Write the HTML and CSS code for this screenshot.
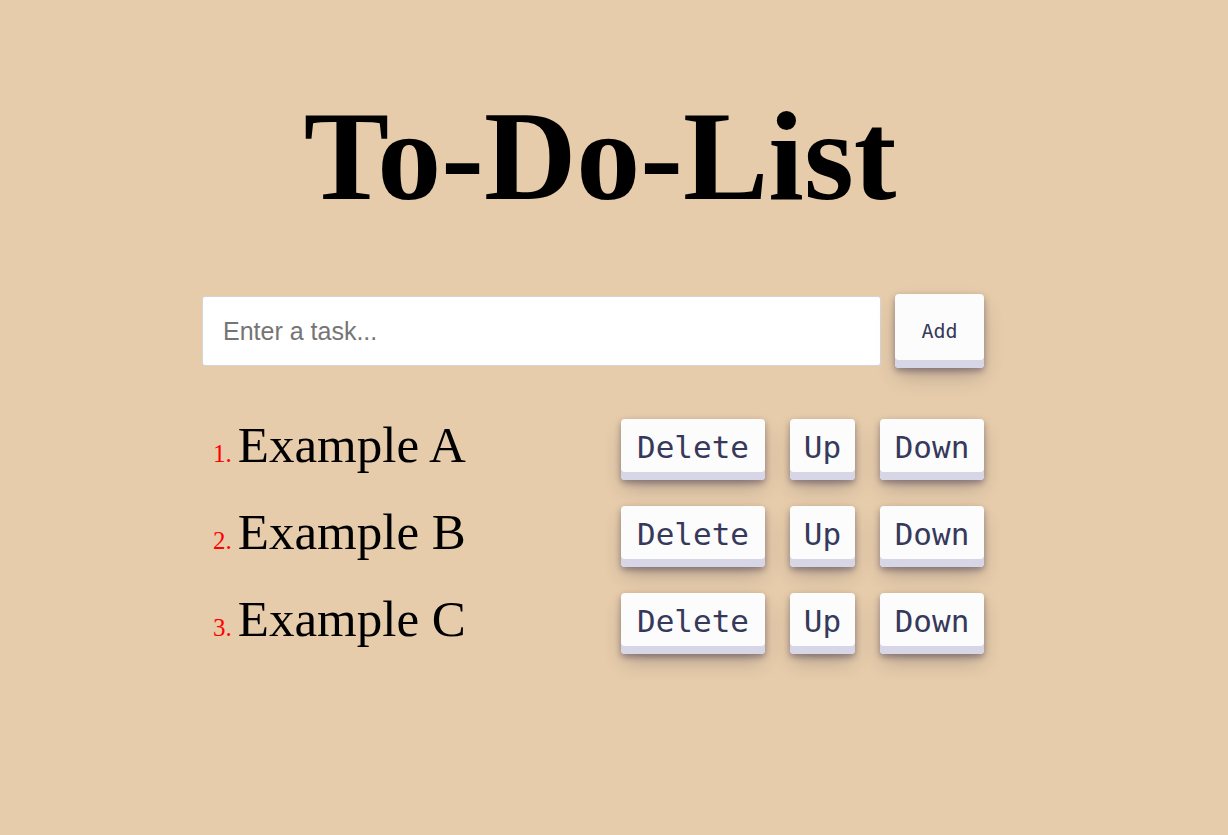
FILE: index.html
```html
<!DOCTYPE html>
<html lang="en">
<head>
<meta charset="utf-8">
<title>To-Do-List</title>
<link rel="stylesheet" href="styles.css">
</head>
<body>
  <h1 class="title">To-Do-List</h1>
  <main class="app">
    <form class="task-form">
      <input class="task-input" type="text" placeholder="Enter a task...">
      <button class="btn btn-add" type="button">Add</button>
    </form>
    <ol class="task-list">
      <li class="task">
        <span class="task-label">Example A</span>
        <div class="task-actions">
          <button class="btn btn-delete" type="button">Delete</button>
          <button class="btn btn-up" type="button">Up</button>
          <button class="btn btn-down" type="button">Down</button>
        </div>
      </li>
      <li class="task">
        <span class="task-label">Example B</span>
        <div class="task-actions">
          <button class="btn btn-delete" type="button">Delete</button>
          <button class="btn btn-up" type="button">Up</button>
          <button class="btn btn-down" type="button">Down</button>
        </div>
      </li>
      <li class="task">
        <span class="task-label">Example C</span>
        <div class="task-actions">
          <button class="btn btn-delete" type="button">Delete</button>
          <button class="btn btn-up" type="button">Up</button>
          <button class="btn btn-down" type="button">Down</button>
        </div>
      </li>
    </ol>
  </main>
</body>
</html>
```
FILE: styles.css
```css
html, body {
  margin: 0;
  background: #e6ccaa;
}
body {
  padding: 0 28px 0 0;
  min-height: 835px;
  box-sizing: border-box;
  font-family: "Liberation Serif", "Times New Roman", serif;
  color: #000;
}
.title {
  margin: 85px 0 0;
  text-align: center;
  font-size: 128px;
  font-weight: bold;
  line-height: 142px;
}
.app {
  width: 796px;
  margin: 67px auto 0;
  padding-right: 14px;
  box-sizing: border-box;
}
.task-form {
  display: flex;
  align-items: center;
  gap: 14px;
  margin: 0;
}
.task-input {
  flex: 1;
  height: 70px;
  box-sizing: border-box;
  border: 1px solid #d4d4d4;
  border-radius: 3px;
  background: #fff;
  padding: 0 20px;
  font-family: "Liberation Sans", Arial, sans-serif;
  font-size: 25px;
  color: #222;
  outline: none;
}
.task-input::placeholder {
  color: #757575;
}
.btn {
  display: inline-flex;
  align-items: center;
  justify-content: center;
  box-sizing: border-box;
  border: 0;
  border-radius: 4px;
  background: #fcfcfd;
  color: #36395a;
  font-family: "DejaVu Sans Mono", monospace;
  line-height: 1;
  padding: 0 0 4px;
  box-shadow: rgba(45, 35, 66, 0.4) 0 3px 6px,
              rgba(45, 35, 66, 0.3) 0 10px 20px -4px,
              #d6d6e7 0 -8px 0 inset;
  cursor: pointer;
}
.btn-add {
  width: 89px;
  height: 74px;
  font-size: 20px;
  padding-bottom: 0;
}
.task-list {
  list-style: none;
  margin: 38px 0 0;
  padding: 0 0 0 11px;
  counter-reset: item;
}
.task {
  display: flex;
  align-items: center;
  height: 87px;
  counter-increment: item;
}
.task-label {
  display: flex;
  align-items: baseline;
  font-size: 51px;
  line-height: 1;
  margin-bottom: 8px;
}
.task-label::before {
  content: counter(item) ".";
  color: #ff0000;
  font-size: 25px;
  margin-right: 6px;
}
.task-actions {
  margin-left: auto;
  display: flex;
  align-items: center;
  gap: 25px;
}
.btn-delete,
.btn-up,
.btn-down {
  height: 61px;
  font-size: 31px;
}
.btn-delete { width: 144px; }
.btn-up { width: 65px; }
.btn-down { width: 104px; }
```
